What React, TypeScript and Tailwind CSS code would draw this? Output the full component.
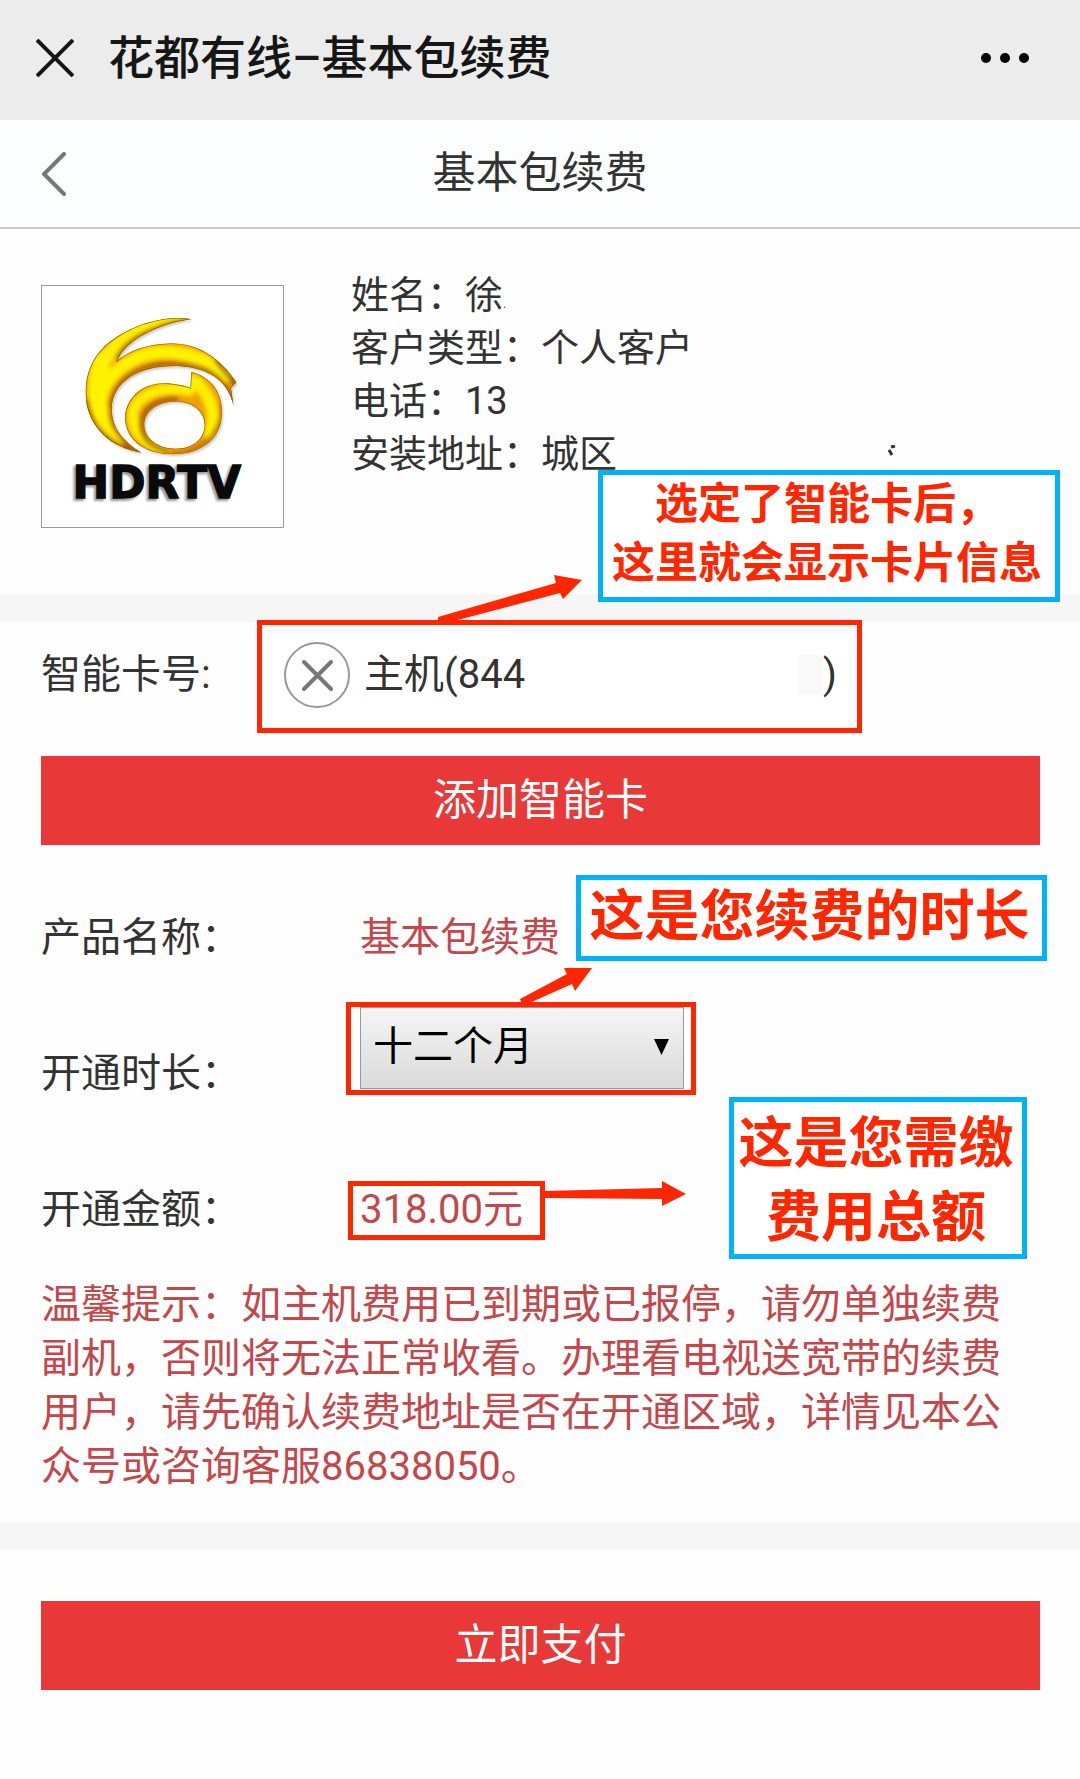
import React from "react";

const OUTER =
  "M485 145 C425 132 325 152 255 202 C190 245 160 310 168 390 C178 470 240 532 335 547 C275 512 243 468 245 410 C250 330 330 286 430 286 C515 286 592 315 612 405 L604 352 L620 335 C570 258 500 215 420 218 C350 220 300 238 262 270 C282 212 380 158 485 145 Z";
const INNER =
  "M485 303 C550 322 582 370 576 440 C570 510 510 552 430 552 C340 552 285 505 285 440 C290 370 350 335 410 338 C440 340 465 345 482 352 Z M438 393 C380 393 343 425 343 462 C343 505 385 535 438 535 C490 535 525 505 525 462 C525 425 490 393 438 393 Z";

function Logo() {
  return (
    <svg viewBox="35 45 726 726" className="block size-full" role="img" aria-label="HDRTV">
      <defs>
        <clipPath id="outer">
          <path d={OUTER} />
        </clipPath>
        <clipPath id="inner">
          <path d={INNER} clipRule="evenodd" />
        </clipPath>
        <filter id="soft" x="-20%" y="-20%" width="140%" height="140%">
          <feGaussianBlur stdDeviation="7" />
        </filter>
        <filter id="shadow" x="-20%" y="-20%" width="140%" height="140%">
          <feGaussianBlur stdDeviation="4" />
        </filter>
      </defs>
      <path d={OUTER} fill="#999" opacity="0.5" filter="url(#shadow)" transform="translate(5 6)" />
      <path d={OUTER} fill="#f0a000" />
      <g clipPath="url(#outer)">
        <g filter="url(#soft)" fill="none" strokeLinecap="round">
          <path d="M455 146 C340 160 240 215 205 300 C180 380 200 440 262 505" stroke="#ffee00" strokeWidth="44" />
          <path d="M210 400 C220 300 330 238 420 245 C490 250 545 275 585 315" stroke="#fff200" strokeWidth="40" />
          <path d="M215 270 C195 330 195 400 215 430" stroke="#fff200" strokeWidth="54" />
          <path d="M320 545 C262 500 238 460 241 408 C248 325 330 276 430 277 C520 280 590 315 610 400" stroke="#a85200" strokeWidth="12" />
          <path d="M262 262 C285 205 380 163 470 148" stroke="#a85600" strokeWidth="12" />
          <path d="M170 390 C180 470 240 530 330 545" stroke="#a85a00" strokeWidth="14" />
          <path d="M560 270 L625 350" stroke="#8a4a10" strokeWidth="12" />
        </g>
        <path d={OUTER} fill="none" stroke="#8d6200" strokeWidth="4" />
      </g>
      <path d={INNER} fillRule="evenodd" fill="#999" opacity="0.5" filter="url(#shadow)" transform="translate(5 6)" />
      <path d={INNER} fillRule="evenodd" fill="#f0a000" />
      <g clipPath="url(#inner)">
        <g filter="url(#soft)" fill="none" strokeLinecap="round">
          <path d="M480 360 C380 340 305 385 308 440 C312 490 350 520 400 538" stroke="#fff000" strokeWidth="32" />
          <path d="M495 330 C550 380 560 440 540 490" stroke="#fff000" strokeWidth="36" />
          <path d="M440 384 C375 384 334 420 334 462 C336 505 370 530 410 542" stroke="#a85200" strokeWidth="14" />
          <path d="M576 400 C580 480 520 550 430 551" stroke="#b06000" strokeWidth="10" />
        </g>
        <path d={INNER} fill="none" stroke="#a06800" strokeWidth="4" />
      </g>
      <text x="121" y="690" fontSize="132" fontWeight="700" fontFamily="DejaVu Sans, sans-serif" fill="#999" stroke="#999" strokeWidth="6" filter="url(#shadow)">HDRTV</text>
      <text x="127" y="684" fontSize="132" fontWeight="700" fontFamily="DejaVu Sans, sans-serif" fill="#0a0a0a" stroke="#0a0a0a" strokeWidth="4">HDRTV</text>
    </svg>
  );
}

function Callout({ className, children }: { className: string; children: React.ReactNode }) {
  return (
    <p
      className={
        "absolute z-10 border-[5px] border-[#00b2f6] bg-white pr-1 text-center font-bold whitespace-nowrap text-[#ff2600] " +
        className
      }
    >
      {children}
    </p>
  );
}

function Arrow({ className, viewBox, points }: { className: string; viewBox: string; points: string }) {
  return (
    <svg className={"pointer-events-none absolute z-10 " + className} viewBox={viewBox} aria-hidden="true">
      <polygon points={points} fill="#ff2600" />
    </svg>
  );
}

const Divider = () => <div className="h-7 bg-[#f6f6f6]" />;

export default function App() {
  return (
    <main className="min-h-screen bg-[#fefefe] font-[Roboto,'Noto_Sans_CJK_SC',sans-serif] text-[40px] text-[#333]">
      <header className="flex h-[120px] items-center bg-[#ececec] pr-[51px] pb-1 pl-9 text-[#161616]">
        <button type="button" aria-label="关闭" className="size-[38px]">
          <svg viewBox="0 0 38 38" fill="none" stroke="currentColor" strokeWidth="4">
            <path d="M1 1 L37 37 M37 1 L1 37" />
          </svg>
        </button>
        <h1 className="ml-[34px] flex-1 text-[46px] leading-none font-medium">花都有线–基本包续费</h1>
        <button type="button" aria-label="更多" className="flex gap-[9px]">
          <span className="size-[10px] rounded-full bg-black" />
          <span className="size-[10px] rounded-full bg-black" />
          <span className="size-[10px] rounded-full bg-black" />
        </button>
      </header>

      <nav className="grid h-[109px] grid-cols-[1fr_auto_1fr] items-center border-b-2 border-[#ccc] bg-[#fcfdfe] px-[42px]">
        <button type="button" aria-label="返回" className="h-11 w-6">
          <svg viewBox="0 0 24 44" fill="none" stroke="#777" strokeWidth="4" strokeLinecap="round">
            <path d="M22 2 L2 22 L22 42" />
          </svg>
        </button>
        <h2 className="text-[43px] leading-none">基本包续费</h2>
      </nav>

      <section className="relative flex px-[41px] pt-10 pb-[66px]">
        <div className="mt-4 size-[243px] shrink-0 border border-[#999] bg-white">
          <Logo />
        </div>
        <div className="ml-[67px] text-[38px] leading-[53px]">
          <p>
            姓名：徐<span className="text-xs">.</span>
          </p>
          <p>客户类型：个人客户</p>
          <p>电话：13</p>
          <p>安装地址：城区</p>
        </div>
        <svg className="absolute top-[216px] left-[888px] h-3 w-2" viewBox="0 0 8 12" fill="none" stroke="#333" strokeWidth="3" aria-hidden="true">
          <path d="M3 2 L7 1 M1 5 L4 10" />
        </svg>
        <Callout className="top-[241px] left-[598px] w-[462px] pb-1 text-[43px] leading-[59px]">
          选定了智能卡后，
          <br />
          这里就会显示卡片信息
        </Callout>
        <Arrow
          className="top-[341px] left-[430px] h-[55px] w-[160px]"
          viewBox="430 570 160 55"
          points="438,617 556,583 554,575 582,580 563,599 560,593 450,622 438,622"
        />
      </section>

      <Divider />

      <section className="pr-10 pb-7 pl-[41px]">
        <div className="-mt-0.5 flex items-center">
          <span className="w-[216px] shrink-0 pb-1">智能卡号:</span>
          <div className="flex h-[113px] w-[605px] items-center border-[5px] border-[#ff2600] bg-white pr-5 pb-1 pl-[22px]">
            <button type="button" aria-label="移除智能卡" className="size-[66px] shrink-0">
              <svg viewBox="0 0 66 66" fill="none" stroke="#999" strokeWidth="2">
                <circle cx="33" cy="33" r="32" />
                <path d="M20 20 L47 47 M47 20 L20 47" stroke="#777" strokeWidth="4" strokeLinecap="round" />
              </svg>
            </button>
            <span className="ml-[14px]">主机(844</span>
            <span className="ml-auto h-10 w-6 bg-[#f9f9f9]" />
            <span>)</span>
          </div>
        </div>

        <button type="button" className="mt-[23px] flex h-[89px] w-full items-center justify-center bg-[#e93838] text-[43px] text-white">
          添加智能卡
        </button>

        <div className="relative mt-[29px]">
          <div className="flex h-32 items-center">
            <span className="w-[305px]">产品名称：</span>
            <span className="pl-[14px] text-[#c4474b]">基本包续费</span>
          </div>
          <div className="flex h-[144px] items-center">
            <label htmlFor="duration" className="w-[305px]">
              开通时长：
            </label>
            <div className="relative h-[93px] w-[350px] self-start border-[5px] border-[#ff2600] bg-white pr-[7px] pl-[9px]">
              <select
                id="duration"
                defaultValue="12"
                className="block h-[82px] w-full appearance-none border border-[#999] bg-linear-to-b from-[#f5f5f5] to-[#dadada] px-3 pb-0.5 text-black"
              >
                <option value="12">十二个月</option>
              </select>
              <svg className="pointer-events-none absolute top-8 right-[22px] h-4 w-[15px]" viewBox="0 0 15 16" aria-hidden="true">
                <polygon points="0,0 15,0 7.5,16" />
              </svg>
            </div>
          </div>
          <div className="flex h-32 items-center">
            <span className="w-[307px]">开通金额：</span>
            <span className="flex h-[59px] w-[197px] items-center border-[5px] border-[#ff2600] pl-[7px] text-[#c4474b]">
              318.00元
            </span>
          </div>

          <Callout className="top-[1px] left-[535px] w-[471px] pb-1 text-[55px] leading-[72px]">这是您续费的时长</Callout>
          <Arrow
            className="top-[92px] left-[474px] h-[40px] w-[80px]"
            viewBox="515 965 80 40"
            points="520,998 567,973 564,967 592,967 575,990 572,983 527,1003 522,1003"
          />
          <Callout className="top-[223px] left-[688px] w-[298px] pt-1 text-[55px] leading-[74px]">
            这是您需缴
            <br />
            费用总额
          </Callout>
          <Arrow
            className="top-[303px] left-[504px] h-[34px] w-[145px]"
            viewBox="545 1177 145 34"
            points="545,1191 662,1188 662,1181 686,1194 662,1206 662,1199 545,1198"
          />
        </div>

        <p className="mt-1 leading-[54px] text-[#c4474b]">
          温馨提示：如主机费用已到期或已报停，请勿单独续费副机，否则将无法正常收看。办理看电视送宽带的续费用户，请先确认续费地址是否在开通区域，详情见本公众号或咨询客服86838050。
        </p>
      </section>

      <Divider />

      <section className="pt-[51px] pr-10 pb-12 pl-[41px]">
        <button type="button" className="flex h-[89px] w-full items-center justify-center bg-[#e93838] text-[43px] text-white">
          立即支付
        </button>
      </section>
    </main>
  );
}
